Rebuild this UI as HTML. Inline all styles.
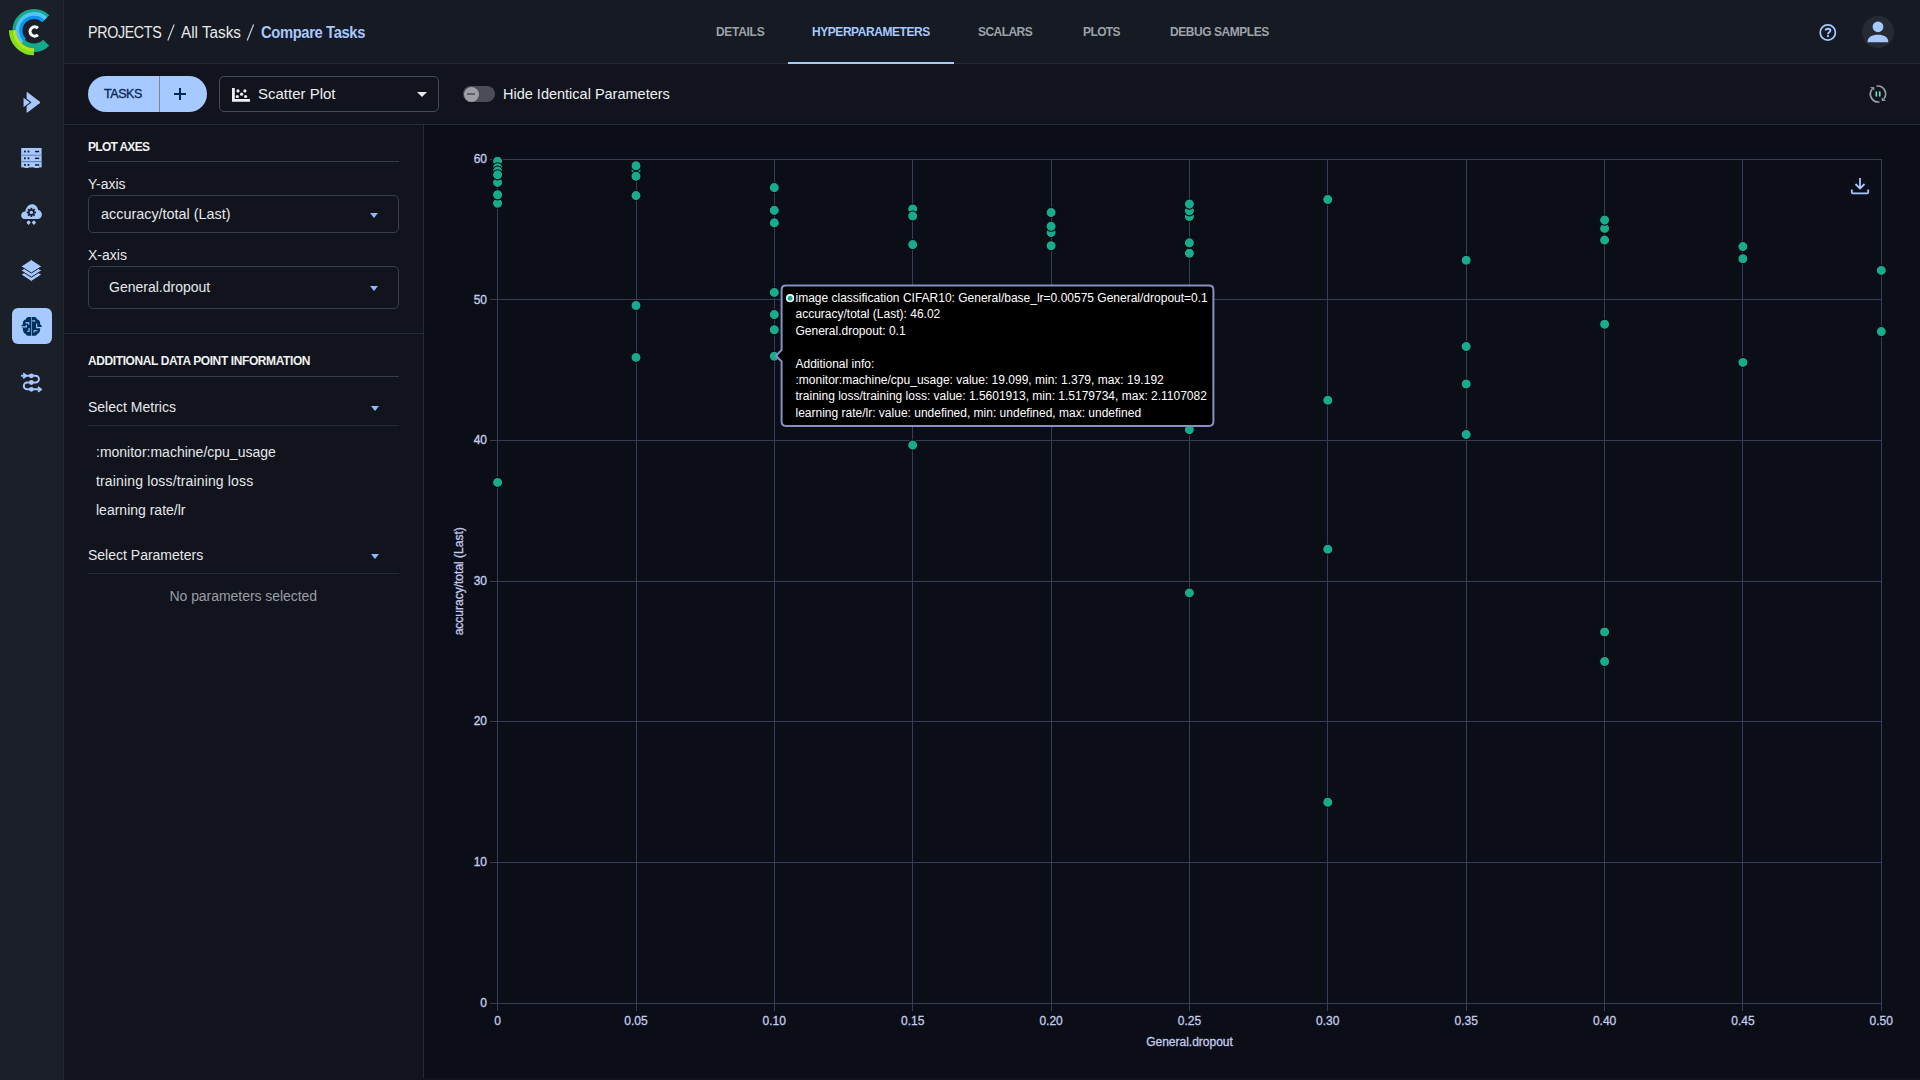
<!DOCTYPE html>
<html><head><meta charset="utf-8">
<style>
*{box-sizing:border-box;margin:0;padding:0}
html,body{width:1920px;height:1080px;overflow:hidden;background:#11141c;font-family:"Liberation Sans",sans-serif;color:#e6e8ec}
.abs{position:absolute}
#side{left:0;top:0;width:63px;height:1080px;background:#1b1f27;border-right:1px solid #262a33;width:64px}
#hdr{left:64px;top:0;width:1856px;height:64px;background:#161a22;border-bottom:1px solid #262a33}
#tb{left:64px;top:64px;width:1856px;height:61px;background:#11141c;border-bottom:1px solid #262a33}
#lp{left:64px;top:125px;width:360px;height:953px;background:#11141c;border-right:1px solid #262a33}
#chart{left:424px;top:125px;width:1496px;height:953px;background:#0b0e16}
.crumb{top:24px;font-size:16px;white-space:nowrap;line-height:18px}
.tab{top:25px;font-size:12px;font-weight:700;color:#9ea2aa;white-space:nowrap;line-height:14px}
.lbl{font-size:14px;white-space:nowrap;line-height:16px}
.sec{font-size:11px;font-weight:700;white-space:nowrap;line-height:13px;color:#f0f1f3}
.hr{height:1px;background:#383c45}
.dd{border:1px solid #3a3e47;border-radius:5px}
.caret{width:0;height:0;border-left:4.5px solid transparent;border-right:4.5px solid transparent;border-top:5px solid #8cbcff}
.tt{font-family:"Liberation Sans",sans-serif;font-size:12px;color:#fff;white-space:nowrap;line-height:16.4px}
</style></head><body>
<div id="side" class="abs"></div>
<div id="hdr" class="abs"></div>
<div id="tb" class="abs"></div>
<div id="lp" class="abs"></div>
<div id="chart" class="abs"></div>

<!-- logo -->
<svg class="abs" style="left:0;top:0" width="64" height="64" viewBox="0 0 64 64">
  <g fill="none" stroke-linecap="butt">
    <path d="M 46.2 18.3 A 17.25 17.25 0 1 0 46.2 42.7" stroke="#14a98a" stroke-width="8.6"/>
    <path d="M 47.7 16.8 A 19.4 19.4 0 0 0 20.3 44.2" stroke="#14a98a" stroke-width="0"/>
    <path d="M 45.84 18.66 A 16.75 16.75 0 0 0 22.16 42.34" stroke="#55c3fb" stroke-width="3.9"/>
    <path d="M 43.3 21.2 A 13.15 13.15 0 0 0 24.7 39.8" stroke="#0a95f8" stroke-width="3.3"/>
    <path d="M 10.75 30.2 A 23.25 23.25 0 0 0 34 53.45" stroke="#80e21c" stroke-width="3.6"/>
    <path d="M 14.25 30.2 A 19.75 19.75 0 0 0 34 49.95" stroke="#b5e314" stroke-width="3.6"/>
    <path d="M 37.9 28.2 A 4.6 4.6 0 1 0 37.9 34.8" stroke="#fff" stroke-width="3.1"/>
  </g>
</svg>

<!-- sidebar icons -->
<svg class="abs" style="left:0;top:80px" width="64" height="320" viewBox="0 80 64 320">
  <!-- arrow -->
  <path d="M26.6 93 Q26.6 91.6 27.8 92.4 L39.6 101.4 Q40.6 102.4 39.6 103.3 L27.8 112.3 Q26.6 113.1 26.6 111.7 Z" fill="#a6c8ff"/>
  <path d="M23 97.4 Q23 96.6 23.8 97.2 L30.8 102.4 L23.8 107.6 Q23 108.2 23 107.4 Z" fill="#a6c8ff" stroke="#1b1f27" stroke-width="1.1" stroke-linejoin="round"/>
  <!-- server -->
  <rect x="21.2" y="148" width="20.4" height="20" rx="0.6" fill="#a6c8ff"/>
  <rect x="21.2" y="154.6" width="20.4" height="1.4" fill="#7894c4"/>
  <rect x="21.2" y="161" width="20.4" height="1.2" fill="#6a84b4"/>
  <g fill="#1b1f27">
    <rect x="24" y="150.6" width="1.8" height="1.8"/><rect x="27.6" y="150.6" width="1.8" height="1.8"/><rect x="35" y="150.8" width="4.2" height="1.5"/>
    <rect x="24" y="157.4" width="1.8" height="1.8"/><rect x="27.6" y="157.4" width="1.8" height="1.8"/><rect x="35" y="157.6" width="4.2" height="1.5"/>
    <rect x="24" y="164" width="1.8" height="1.8"/><rect x="27.6" y="164" width="1.8" height="1.8"/><rect x="35" y="164.2" width="4.2" height="1.5"/>
    <rect x="21" y="167.4" width="3.5" height="1"/><rect x="28.5" y="167.4" width="6" height="1"/><rect x="38.8" y="167.4" width="3" height="1"/>
  </g>
  <!-- cloud -->
  <path d="M25.2 219 C21.8 219 20.8 216.2 21.3 214.4 C21.8 212.3 23.6 211.2 25.3 211.4 C25.8 207.4 28.8 204.2 32 204.2 C35.4 204.2 37.6 206.7 38.1 209.9 C40.6 210.3 42 212.5 41.9 214.8 C41.8 217.2 40 219 37.6 219 Z" fill="#a6c8ff"/>
  <g transform="translate(31.35 212.4)" fill="#1b1f27">
    <circle r="3.2"/>
    <rect x="-0.9" y="-4.6" width="1.8" height="9.2"/><rect x="-4.6" y="-0.9" width="9.2" height="1.8"/>
    <rect x="-0.9" y="-4.6" width="1.8" height="9.2" transform="rotate(45)"/><rect x="-0.9" y="-4.6" width="1.8" height="9.2" transform="rotate(-45)"/>
    <circle r="1.7" fill="#a6c8ff"/>
  </g>
  <path d="M28.6 220.2 L30.8 222.6 L28.6 225 L26.4 222.6 Z M33.9 220.2 L36.1 222.6 L33.9 225 L31.7 222.6 Z" fill="#a6c8ff"/>
  <!-- layers -->
  <g fill="#a6c8ff" stroke="#1b1f27" stroke-width="1" stroke-linejoin="round">
    <path d="M31.35 268.4 L41.8 274.6 L31.35 281.4 L20.9 274.6 Z"/>
    <path d="M31.35 264.2 L41.8 270.5 L31.35 277.2 L20.9 270.5 Z"/>
    <path d="M31.35 259.6 L41.8 266.4 L31.35 273 L20.9 266.4 Z"/>
  </g>
  <!-- active brain -->
  <rect x="12" y="308" width="40" height="36" rx="6" fill="#a6c9ff"/>
  <g fill="#00305e">
    <path d="M31.2 317.1 L28.6 316.9 C27 316.9 26 318.3 25.8 319.4 C24.2 319.7 23.2 320.7 23.3 321.6 C22.5 322.5 22.8 323.5 23.1 324.2 C21.9 324.6 21.3 325.5 21.3 326.4 C21.3 327.3 22.1 328.2 23.1 328.6 C22.7 329.6 22.9 331 23.5 331.7 C24.1 333 24.9 333.8 25.7 334 C26.2 335 26.9 335.6 27.9 335.7 L31.2 335.7 Z"/>
    <path d="M31.8 317.1 L34.4 316.9 C36 316.9 37 318.3 37.2 319.4 C38.8 319.7 39.8 320.7 39.7 321.6 C40.5 322.5 40.2 323.5 39.9 324.2 C41.1 324.6 41.7 325.5 41.7 326.4 C41.7 327.3 40.9 328.2 39.9 328.6 C40.3 329.6 40.1 331 39.5 331.7 C38.9 333 38.1 333.8 37.3 334 C36.8 335 36.1 335.6 35.1 335.7 L31.8 335.7 Z"/>
  </g>
  <g stroke="#a6c9ff" stroke-width="1.1" fill="none">
    <path d="M21 326.9 H26.3 V325 M25.4 322.9 H28.8 V324.8 M27.2 331.2 H29.1 V328 M32.4 320.9 H35.2 M36.7 323.6 V327.6 H42 M34.1 332.6 V330.7 H37.3"/>
  </g>
  <!-- pipelines -->
  <g fill="none" stroke="#a6c8ff" stroke-width="1.9">
    <path d="M21.1 375.8 H35.6 A3.35 3.35 0 0 1 35.6 382.5 H27.2 A3.4 3.4 0 0 0 27.2 389.3 H41"/>
    <path d="M23.2 373.3 L26.2 375.8 L23.2 378.3 M38 387 L41 389.4 L38 391.8" stroke-width="1.8"/>
  </g>
  <g fill="#a6c8ff">
    <circle cx="31.35" cy="375.8" r="2.4"/><circle cx="31.35" cy="382.5" r="2.4"/><circle cx="31.35" cy="389.3" r="2.4"/>
  </g>
</svg>

<!-- breadcrumbs -->
<div class="abs crumb" style="left:88px;letter-spacing:-0.4px;color:#e8eaee;transform:scaleX(0.893);transform-origin:0 0">PROJECTS</div>
<svg class="abs" style="left:160px;top:20px" width="100" height="26" viewBox="160 20 100 26">
  <path d="M167.8 40.6 L174.2 24.4 M247.2 40.6 L253.6 24.4" stroke="#c3c8d2" stroke-width="1.25"/>
</svg>
<div class="abs crumb" style="left:181px;letter-spacing:0px;color:#e8eaee;transform:scaleX(0.955);transform-origin:0 0">All Tasks</div>
<div class="abs crumb" style="left:261px;letter-spacing:-0.4px;color:#a6c8ff;font-weight:700;transform:scaleX(0.922);transform-origin:0 0">Compare Tasks</div>

<!-- tabs -->
<div class="abs tab" style="left:716px;letter-spacing:-0.3px">DETAILS</div>
<div class="abs tab" style="left:812px;color:#a6c9ff;letter-spacing:-0.45px">HYPERPARAMETERS</div>
<div class="abs tab" style="left:978px;letter-spacing:-0.55px">SCALARS</div>
<div class="abs tab" style="left:1083px;letter-spacing:-0.6px">PLOTS</div>
<div class="abs tab" style="left:1170px;letter-spacing:-0.45px">DEBUG SAMPLES</div>
<div class="abs" style="left:788px;top:62px;width:166px;height:2px;background:#a6ccff"></div>

<!-- help + avatar -->
<svg class="abs" style="left:1810px;top:14px" width="90" height="36" viewBox="1810 14 90 36">
  <circle cx="1827.8" cy="32.4" r="7.6" fill="none" stroke="#a6c8ff" stroke-width="1.75"/>
  <path d="M1825.6 30.6 C1825.6 28.2 1830.4 28.2 1830.4 30.6 C1830.4 32.3 1828 32.2 1828 34.2" fill="none" stroke="#a6c8ff" stroke-width="1.9"/><rect x="1827" y="35.2" width="2" height="1.8" fill="#a6c8ff"/>
  <circle cx="1878" cy="32" r="16" fill="#262a33"/>
  <circle cx="1878" cy="26.8" r="5.4" fill="#a6c8ff"/>
  <path d="M1867.5 42.2 C1867.5 37 1872 34.8 1878 34.8 C1884 34.8 1888.3 37 1888.3 42.2 Z" fill="#a6c8ff"/>
</svg>

<!-- toolbar -->
<div class="abs" style="left:88px;top:76px;width:119px;height:36px;border-radius:18px;background:#a6c9ff"></div>
<div class="abs" style="left:159px;top:76px;width:1px;height:36px;background:#80858f"></div>
<div class="abs" style="left:104px;top:87px;font-size:12.5px;color:#08285a;letter-spacing:-0.45px;line-height:14px;-webkit-text-stroke:0.35px #08285a">TASKS</div>
<div class="abs" style="left:173.9px;top:92.8px;width:12.2px;height:2.4px;background:#062652"></div>
<div class="abs" style="left:178.8px;top:88.3px;width:2.4px;height:11.7px;background:#062652"></div>

<div class="abs dd" style="left:219px;top:76px;width:220px;height:36px;border-color:#464a52"></div>
<svg class="abs" style="left:226px;top:82px" width="30" height="24" viewBox="226 82 30 24">
  <path d="M233.4 87.9 V100.4 H250" fill="none" stroke="#eef0f4" stroke-width="2.8"/>
  <g fill="#eef0f4"><circle cx="238" cy="90.9" r="1.6"/><circle cx="244.9" cy="90.9" r="1.6"/><circle cx="241.6" cy="94.2" r="1.6"/><circle cx="237.3" cy="96.5" r="1.6"/><circle cx="245.6" cy="96.5" r="1.6"/></g>
</svg>
<div class="abs" style="left:258px;top:85px;font-size:15px;line-height:18px;color:#eceef1">Scatter Plot</div>
<div class="abs caret" style="left:417px;top:92px;border-left-width:5px;border-right-width:5px;border-top-width:5.5px;border-top-color:#e6e8ec"></div>

<div class="abs" style="left:463px;top:86px;width:32px;height:16px;border-radius:8px;background:#4a4d55"></div>
<div class="abs" style="left:463.5px;top:86.5px;width:15px;height:15px;border-radius:8px;background:#9c9fa6"></div>
<div class="abs" style="left:467px;top:93px;width:8px;height:1.8px;background:#5c5f66"></div>
<div class="abs" style="left:503px;top:85px;font-size:14.5px;line-height:18px;color:#eef0f3">Hide Identical Parameters</div>

<svg class="abs" style="left:1864px;top:80px" width="28" height="28" viewBox="1864 80 28 28">
  <path d="M1876.6 86.1 A7.9 7.9 0 0 1 1883.9 98.8" fill="none" stroke="#9a9da5" stroke-width="1.7"/>
  <path d="M1879.4 101.9 A7.9 7.9 0 0 1 1872.1 89.2" fill="none" stroke="#9a9da5" stroke-width="1.7"/>
  <path d="M1881.6 97.6 L1886.1 100.8 L1881.8 101.1 Z" fill="#9a9da5"/>
  <path d="M1874.4 90.4 L1869.9 87.2 L1874.2 86.9 Z" fill="#9a9da5"/>
  <rect x="1875.5" y="91.3" width="1.7" height="5.4" rx="0.8" fill="#72dcc0"/><rect x="1878.9" y="91.3" width="1.7" height="5.4" rx="0.8" fill="#72dcc0"/>
</svg>

<!-- left panel -->
<div class="abs sec" style="left:88px;top:141px;font-size:12px;letter-spacing:-0.7px">PLOT AXES</div>
<div class="abs hr" style="left:88px;top:161px;width:311px"></div>
<div class="abs lbl" style="left:88px;top:176px">Y-axis</div>
<div class="abs dd" style="left:88px;top:195px;width:311px;height:38px"></div>
<div class="abs lbl" style="left:101px;top:206px;font-size:14.4px">accuracy/total (Last)</div>
<div class="abs caret" style="left:369.5px;top:212.5px"></div>
<div class="abs lbl" style="left:88px;top:247px">X-axis</div>
<div class="abs dd" style="left:88px;top:266px;width:311px;height:43px"></div>
<div class="abs lbl" style="left:109px;top:279px">General.dropout</div>
<div class="abs caret" style="left:369.5px;top:286px"></div>
<div class="abs hr" style="left:64px;top:333px;width:359px;background:#262a33"></div>

<div class="abs sec" style="left:88px;top:354.5px;font-size:12px;letter-spacing:-0.4px">ADDITIONAL DATA POINT INFORMATION</div>
<div class="abs hr" style="left:88px;top:376px;width:311px"></div>
<div class="abs lbl" style="left:88px;top:399px">Select Metrics</div>
<div class="abs caret" style="left:370.5px;top:405.5px"></div>
<div class="abs hr" style="left:88px;top:425px;width:311px;background:#262a33"></div>
<div class="abs lbl" style="left:96px;top:443.5px">:monitor:machine/cpu_usage</div>
<div class="abs lbl" style="left:96px;top:473px;letter-spacing:0.15px">training loss/training loss</div>
<div class="abs lbl" style="left:96px;top:502px">learning rate/lr</div>
<div class="abs lbl" style="left:88px;top:547px">Select Parameters</div>
<div class="abs caret" style="left:370.5px;top:553.5px"></div>
<div class="abs hr" style="left:88px;top:573px;width:311px;background:#262a33"></div>
<div class="abs lbl" style="left:169.5px;top:588px;color:#9a9ea6;letter-spacing:-0.05px">No parameters selected</div>

<!-- CHART -->
<svg width="1496" height="955" viewBox="424 125 1496 955" style="position:absolute;left:424px;top:125px">
<g stroke="#383c5b" stroke-width="1" shape-rendering="crispEdges">
<line x1="497.6" y1="159.3" x2="497.6" y2="1011"/>
<line x1="636.0" y1="159.3" x2="636.0" y2="1011"/>
<line x1="774.3" y1="159.3" x2="774.3" y2="1011"/>
<line x1="912.7" y1="159.3" x2="912.7" y2="1011"/>
<line x1="1051.1" y1="159.3" x2="1051.1" y2="1011"/>
<line x1="1189.4" y1="159.3" x2="1189.4" y2="1011"/>
<line x1="1327.8" y1="159.3" x2="1327.8" y2="1011"/>
<line x1="1466.2" y1="159.3" x2="1466.2" y2="1011"/>
<line x1="1604.6" y1="159.3" x2="1604.6" y2="1011"/>
<line x1="1742.9" y1="159.3" x2="1742.9" y2="1011"/>
<line x1="1881.3" y1="159.3" x2="1881.3" y2="1011"/>
<line x1="490" y1="1003.0" x2="1881.3" y2="1003.0"/>
<line x1="490" y1="862.4" x2="1881.3" y2="862.4"/>
<line x1="490" y1="721.8" x2="1881.3" y2="721.8"/>
<line x1="490" y1="581.1" x2="1881.3" y2="581.1"/>
<line x1="490" y1="440.5" x2="1881.3" y2="440.5"/>
<line x1="490" y1="299.9" x2="1881.3" y2="299.9"/>
<line x1="490" y1="159.3" x2="1881.3" y2="159.3"/>
</g>
<g font-family="Liberation Sans" font-size="12" fill="#c4cbeb" stroke="#c4cbeb" stroke-width="0.35" text-anchor="end">
<text x="487" y="1006.6">0</text>
<text x="487" y="866.0">10</text>
<text x="487" y="725.4">20</text>
<text x="487" y="584.7">30</text>
<text x="487" y="444.1">40</text>
<text x="487" y="303.5">50</text>
<text x="487" y="162.9">60</text>
</g>
<g font-family="Liberation Sans" font-size="12" fill="#c4cbeb" stroke="#c4cbeb" stroke-width="0.3" text-anchor="middle">
<text x="497.6" y="1025.3">0</text>
<text x="636.0" y="1025.3">0.05</text>
<text x="774.3" y="1025.3">0.10</text>
<text x="912.7" y="1025.3">0.15</text>
<text x="1051.1" y="1025.3">0.20</text>
<text x="1189.4" y="1025.3">0.25</text>
<text x="1327.8" y="1025.3">0.30</text>
<text x="1466.2" y="1025.3">0.35</text>
<text x="1604.6" y="1025.3">0.40</text>
<text x="1742.9" y="1025.3">0.45</text>
<text x="1881.3" y="1025.3">0.50</text>
<text x="1189.5" y="1046">General.dropout</text>
<text transform="translate(462.6 581.3) rotate(-90)" x="0" y="0">accuracy/total (Last)</text>
</g>
<g fill="#18ac8e" stroke="#04060a" stroke-width="1.05">
<circle cx="497.6" cy="482.4" r="5.05"/>
<circle cx="497.6" cy="203.2" r="5.05"/>
<circle cx="497.6" cy="194.8" r="5.05"/>
<circle cx="497.6" cy="182.4" r="5.05"/>
<circle cx="497.6" cy="161.2" r="5.05"/>
<circle cx="497.6" cy="167.8" r="5.05"/>
<circle cx="497.6" cy="171.1" r="5.05"/>
<circle cx="497.6" cy="174.8" r="5.05"/>
<circle cx="636.0" cy="357.4" r="5.05"/>
<circle cx="636.0" cy="305.5" r="5.05"/>
<circle cx="636.0" cy="195.6" r="5.05"/>
<circle cx="636.0" cy="170.4" r="5.05"/>
<circle cx="636.0" cy="165.8" r="5.05"/>
<circle cx="636.0" cy="176.2" r="5.05"/>
<circle cx="774.3" cy="356.2" r="5.05"/>
<circle cx="774.3" cy="329.8" r="5.05"/>
<circle cx="774.3" cy="314.6" r="5.05"/>
<circle cx="774.3" cy="292.4" r="5.05"/>
<circle cx="774.3" cy="222.9" r="5.05"/>
<circle cx="774.3" cy="210.4" r="5.05"/>
<circle cx="774.3" cy="187.6" r="5.05"/>
<circle cx="912.7" cy="445.1" r="5.05"/>
<circle cx="912.7" cy="244.6" r="5.05"/>
<circle cx="912.7" cy="209.0" r="5.05"/>
<circle cx="912.7" cy="216.0" r="5.05"/>
<circle cx="1051.1" cy="245.7" r="5.05"/>
<circle cx="1051.1" cy="232.5" r="5.05"/>
<circle cx="1051.1" cy="226.2" r="5.05"/>
<circle cx="1051.1" cy="212.5" r="5.05"/>
<circle cx="1189.4" cy="592.9" r="5.05"/>
<circle cx="1189.4" cy="429.6" r="5.05"/>
<circle cx="1189.4" cy="253.2" r="5.05"/>
<circle cx="1189.4" cy="242.9" r="5.05"/>
<circle cx="1189.4" cy="216.5" r="5.05"/>
<circle cx="1189.4" cy="210.8" r="5.05"/>
<circle cx="1189.4" cy="204.1" r="5.05"/>
<circle cx="1327.8" cy="802.2" r="5.05"/>
<circle cx="1327.8" cy="549.3" r="5.05"/>
<circle cx="1327.8" cy="400.3" r="5.05"/>
<circle cx="1327.8" cy="199.5" r="5.05"/>
<circle cx="1466.2" cy="434.5" r="5.05"/>
<circle cx="1466.2" cy="384.0" r="5.05"/>
<circle cx="1466.2" cy="346.5" r="5.05"/>
<circle cx="1466.2" cy="260.2" r="5.05"/>
<circle cx="1604.6" cy="661.5" r="5.05"/>
<circle cx="1604.6" cy="632.0" r="5.05"/>
<circle cx="1604.6" cy="324.2" r="5.05"/>
<circle cx="1604.6" cy="240.1" r="5.05"/>
<circle cx="1604.6" cy="228.4" r="5.05"/>
<circle cx="1604.6" cy="220.1" r="5.05"/>
<circle cx="1742.9" cy="362.4" r="5.05"/>
<circle cx="1742.9" cy="258.7" r="5.05"/>
<circle cx="1742.9" cy="246.6" r="5.05"/>
<circle cx="1881.3" cy="331.6" r="5.05"/>
<circle cx="1881.3" cy="270.4" r="5.05"/>
</g>
</svg>

<!-- download icon -->
<svg class="abs" style="left:1850px;top:176px" width="20" height="20" viewBox="0 0 20 20">
  <path d="M10 2 V12.5 M5.5 8 L10 12.5 L14.5 8" fill="none" stroke="#a6c8ff" stroke-width="1.8"/>
  <path d="M1.8 13.5 V16.3 Q1.8 17.3 2.8 17.3 H17.2 Q18.2 17.3 18.2 16.3 V13.5" fill="none" stroke="#a6c8ff" stroke-width="1.8"/>
</svg>

<!-- tooltip -->
<svg class="abs" style="left:770px;top:280px" width="450" height="152" viewBox="770 280 450 152">
  <path d="M786 285.6 H1209 Q1213.4 285.6 1213.4 290 V421.6 Q1213.4 426 1209 426 H786 Q781.6 426 781.6 421.6 V361.5 L776 355.7 L781.6 349.9 V290 Q781.6 285.6 786 285.6 Z" fill="#000" stroke="#8690c4" stroke-width="2"/>
  <circle cx="790.1" cy="298.2" r="3.3" fill="#18ac8e" stroke="#fff" stroke-width="1.6"/>
</svg>
<div class="abs tt" style="left:795.5px;top:290px">image classification CIFAR10: General/base_lr=0.00575 General/dropout=0.1<br>accuracy/total (Last): 46.02<br>General.dropout: 0.1<br><br>Additional info:<br>:monitor:machine/cpu_usage: value: 19.099, min: 1.379, max: 19.192<br>training loss/training loss: value: 1.5601913, min: 1.5179734, max: 2.1107082<br>learning rate/lr: value: undefined, min: undefined, max: undefined</div>
</body></html>
